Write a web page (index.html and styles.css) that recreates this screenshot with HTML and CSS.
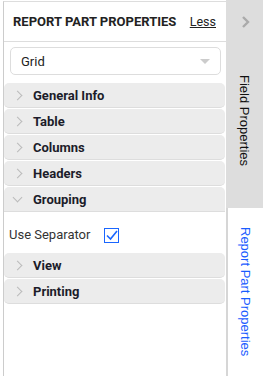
FILE: index.html
```html
<!DOCTYPE html>
<html lang="en">
<head>
    <meta charset="UTF-8">
    <meta name="viewport" content="width=device-width, initial-scale=1.0">
    <title>Report Part Properties</title>
    <link rel="stylesheet" href="styles.css">
</head>
<body>

    <div class="panel">
        <div class="panel-header">
            <span class="panel-title">REPORT PART PROPERTIES</span>
            <a class="less-link" href="#">Less</a>
        </div>

        <div class="select-box">
            <span>Grid</span>
            <span class="caret"></span>
        </div>

        <div class="sections">
            <div class="section"><span class="chev"></span>General Info</div>
            <div class="section"><span class="chev"></span>Table</div>
            <div class="section"><span class="chev"></span>Columns</div>
            <div class="section"><span class="chev"></span>Headers</div>
            <div class="section open"><span class="chev down"></span>Grouping</div>
            <div class="section-body">
                <label class="field">Use Separator
                    <span class="checkbox">
                        <svg width="14" height="14" viewBox="0 0 14 14"><path d="M2 7.5 L5.5 11 L12 3" fill="none" stroke="#1a66ff" stroke-width="1.6"/></svg>
                    </span>
                </label>
            </div>
            <div class="section"><span class="chev"></span>View</div>
            <div class="section"><span class="chev"></span>Printing</div>
        </div>
    </div>

    <div class="tabs">
        <div class="tab tab-field">
            <svg class="tab-arrow" width="10" height="14" viewBox="0 0 10 14"><path d="M2 2 L7 7 L2 12" fill="none" stroke="#aaa" stroke-width="2.4"/></svg>
            <span class="tab-label">Field Properties</span>
        </div>
        <div class="tab tab-report">
            <span class="tab-label">Report Part Properties</span>
        </div>
    </div>

</body>
</html>
```

FILE: styles.css
```css
body { margin: 0; display: flex; height: 376px; overflow: hidden; font-family: Roboto, "Liberation Sans", sans-serif; background: #fff; }

.panel { width: 222px; margin: 1px 0 0 3px; border-left: 1px solid #ccc; border-top: 1px solid #ddd; }
.panel-header { height: 39px; display: flex; align-items: center; justify-content: space-between; padding: 0 10px 0 9px; border-bottom: 1px solid #ddd; }
.panel-title { font-size: 13px; font-weight: bold; color: #222; }
.less-link { font-size: 12.5px; color: #222; text-decoration: underline; }

.select-box { height: 26px; margin: 5px 5px 0 6px; border: 1px solid #ddd; border-radius: 5px; display: flex; align-items: center; justify-content: space-between; padding: 0 10px; font-size: 13px; color: #222; }
.caret { width: 0; height: 0; border-left: 5px solid transparent; border-right: 5px solid transparent; border-top: 5px solid #ccc; }

.sections { margin-top: 8px; }
.section { height: 24px; margin: 0 1px 1px 0; background: #ececec; border-radius: 5px; border-bottom: 1px solid #ddd; display: flex; align-items: center; font-size: 13px; font-weight: bold; color: #1c1c2a; }
.section.open { border-radius: 5px 5px 0 0; margin-bottom: 0; }
.chev { width: 6px; height: 6px; border-right: 1px solid #bbb; border-top: 1px solid #bbb; transform: rotate(45deg); margin: 0 12px 0 10px; }
.chev.down { transform: rotate(135deg); margin-top: -4px; }

.section-body { height: 37px; padding: 4px 0 0 5px; display: flex; align-items: center; }
.field { display: flex; align-items: center; font-size: 13px; color: #333; }
.checkbox { width: 13px; height: 13px; border: 1px solid #1a66ff; margin-left: 14px; position: relative; top: 1px; }
.checkbox svg { display: block; margin: -1px 0 0 0; }

.tabs { width: 37px; display: flex; flex-direction: column; }
.tab { display: flex; flex-direction: column; align-items: center; }
.tab-field { height: 208px; background: #ddd; padding-top: 15px; box-sizing: border-box; }
.tab-arrow { margin-bottom: 46px; margin-left: 2px; }
.tab-report { flex: 1; border-left: 2px solid #d6d6d6; padding-top: 19px; }
.tab-label { writing-mode: vertical-rl; font-family: "Liberation Sans", Arial, sans-serif; font-size: 13px; color: #111; }
.tab-report .tab-label { color: #1a5cff; }
```
